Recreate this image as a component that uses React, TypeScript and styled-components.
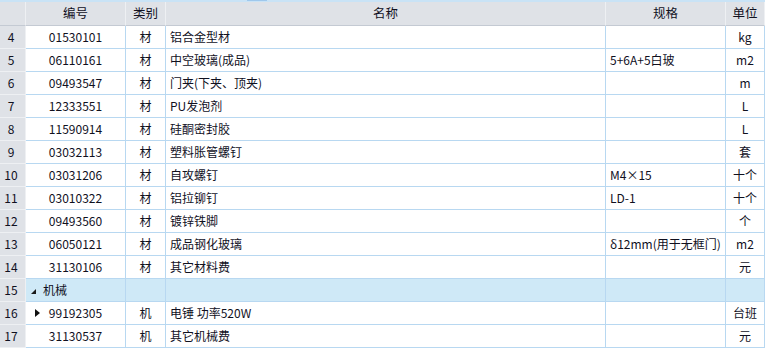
import styled, { createGlobalStyle } from "styled-components";

type Item = {
  no: number;
  code?: string;
  kind?: string;
  name: string;
  spec?: string;
  unit?: string;
  group?: boolean;
  current?: boolean;
};

const rows: Item[] = [
  { no: 4, code: "01530101", kind: "材", name: "铝合金型材", unit: "kg" },
  { no: 5, code: "06110161", kind: "材", name: "中空玻璃(成品)", spec: "5+6A+5白玻", unit: "m2" },
  { no: 6, code: "09493547", kind: "材", name: "门夹(下夹、顶夹)", unit: "m" },
  { no: 7, code: "12333551", kind: "材", name: "PU发泡剂", unit: "L" },
  { no: 8, code: "11590914", kind: "材", name: "硅酮密封胶", unit: "L" },
  { no: 9, code: "03032113", kind: "材", name: "塑料胀管螺钉", unit: "套" },
  { no: 10, code: "03031206", kind: "材", name: "自攻螺钉", spec: "M4×15", unit: "十个" },
  { no: 11, code: "03010322", kind: "材", name: "铝拉铆钉", spec: "LD-1", unit: "十个" },
  { no: 12, code: "09493560", kind: "材", name: "镀锌铁脚", unit: "个" },
  { no: 13, code: "06050121", kind: "材", name: "成品钢化玻璃", spec: "δ12mm(用于无框门)", unit: "m2" },
  { no: 14, code: "31130106", kind: "材", name: "其它材料费", unit: "元" },
  { no: 15, name: "机械", group: true },
  { no: 16, code: "99192305", kind: "机", name: "电锤 功率520W", unit: "台班", current: true },
  { no: 17, code: "31130537", kind: "机", name: "其它机械费", unit: "元" },
];

function App() {
  return (
    <>
      <GlobalStyle />
      <Wrapper>
        <TopStrip>
          <ScrollThumb />
        </TopStrip>
        <Grid>
          <HeadCell />
          <HeadCell>编号</HeadCell>
          <HeadCell>类别</HeadCell>
          <HeadCell>名称</HeadCell>
          <HeadCell>规格</HeadCell>
          <HeadCell>单位</HeadCell>

          {rows.map((r) =>
            r.group ? (
              <Row key={r.no}>
                <NumCell>{r.no}</NumCell>
                <Cell $group $align="left">
                  <GroupToggle viewBox="0 0 5 5">
                    <polygon points="5,0 5,5 0,5" fill="#1a1a1a" />
                  </GroupToggle>
                  {r.name}
                </Cell>
                <Cell $group />
                <Cell $group />
                <Cell $group />
                <Cell $group />
              </Row>
            ) : (
              <Row key={r.no}>
                <NumCell>{r.no}</NumCell>
                <CodeCell>
                  <Marker>
                    {r.current ? (
                      <svg width="5" height="8" viewBox="0 0 5 8">
                        <polygon points="0,0 5,4 0,8" fill="#111" />
                      </svg>
                    ) : null}
                  </Marker>
                  <span>{r.code}</span>
                  <span />
                </CodeCell>
                <Cell $align="center">{r.kind}</Cell>
                <Cell $align="left">{r.name}</Cell>
                <Cell $align="left">{r.spec}</Cell>
                <Cell $align="center">{r.unit}</Cell>
              </Row>
            )
          )}
        </Grid>
      </Wrapper>
    </>
  );
}

const GlobalStyle = createGlobalStyle`
  html, body {
    margin: 0;
    padding: 0;
    background: #fff;
  }
  body {
    font-family: "Noto Sans CJK SC", "Noto Sans", sans-serif;
    font-size: 12px;
    color: #10101e;
  }
`;

const Wrapper = styled.div`
  width: 765px;
  height: 349px;
  overflow: hidden;
  background: #fff;
`;

const TopStrip = styled.div`
  height: 2px;
  background: #c9e3f6;
  display: flex;
  padding-left: 247px;
`;

const ScrollThumb = styled.div`
  width: 20px;
  height: 1px;
  background: #9fc8ec;
`;

const Grid = styled.div`
  display: grid;
  grid-template-columns: 26px 100px 40px 440px 120px 1fr;
  grid-auto-rows: 23px;
  grid-template-rows: 24px;
`;

const HeadCell = styled.div`
  box-sizing: border-box;
  background: #dfe2e7;
  border-right: 1px solid #eef0f3;
  border-bottom: 1px solid #c4cad3;
  display: flex;
  align-items: center;
  justify-content: center;
  line-height: 1;
  font-size: 12.5px;
  color: #10101e;
`;

const Row = styled.div`
  display: contents;
`;

const NumCell = styled.div`
  box-sizing: border-box;
  background: #dfe2e7;
  border-right: 1px solid #eef0f3;
  border-bottom: 1px solid #eef0f3;
  display: flex;
  align-items: center;
  justify-content: center;
  padding-right: 3px;
  line-height: 1;
`;

const Cell = styled.div<{ $align?: "left" | "center"; $group?: boolean }>`
  box-sizing: border-box;
  background: ${(p) => (p.$group ? "#cfe9f7" : "#fff")};
  border-right: 1px solid #b8d8f1;
  border-bottom: 1px solid #b8d8f1;
  display: flex;
  align-items: center;
  justify-content: ${(p) => (p.$align === "left" ? "flex-start" : "center")};
  padding: 0 4px;
  white-space: nowrap;
  overflow: hidden;
  line-height: 1;
`;

const CodeCell = styled.div`
  box-sizing: border-box;
  background: #fff;
  border-right: 1px solid #b8d8f1;
  border-bottom: 1px solid #b8d8f1;
  display: grid;
  grid-template-columns: 1fr auto 1fr;
  align-items: center;
  line-height: 1;
`;

const Marker = styled.span`
  display: flex;
  justify-content: flex-end;
  padding-right: 9px;
`;

const GroupToggle = styled.svg`
  width: 5px;
  height: 5px;
  margin: 2px 7px 0 1px;
`;

export default App;
